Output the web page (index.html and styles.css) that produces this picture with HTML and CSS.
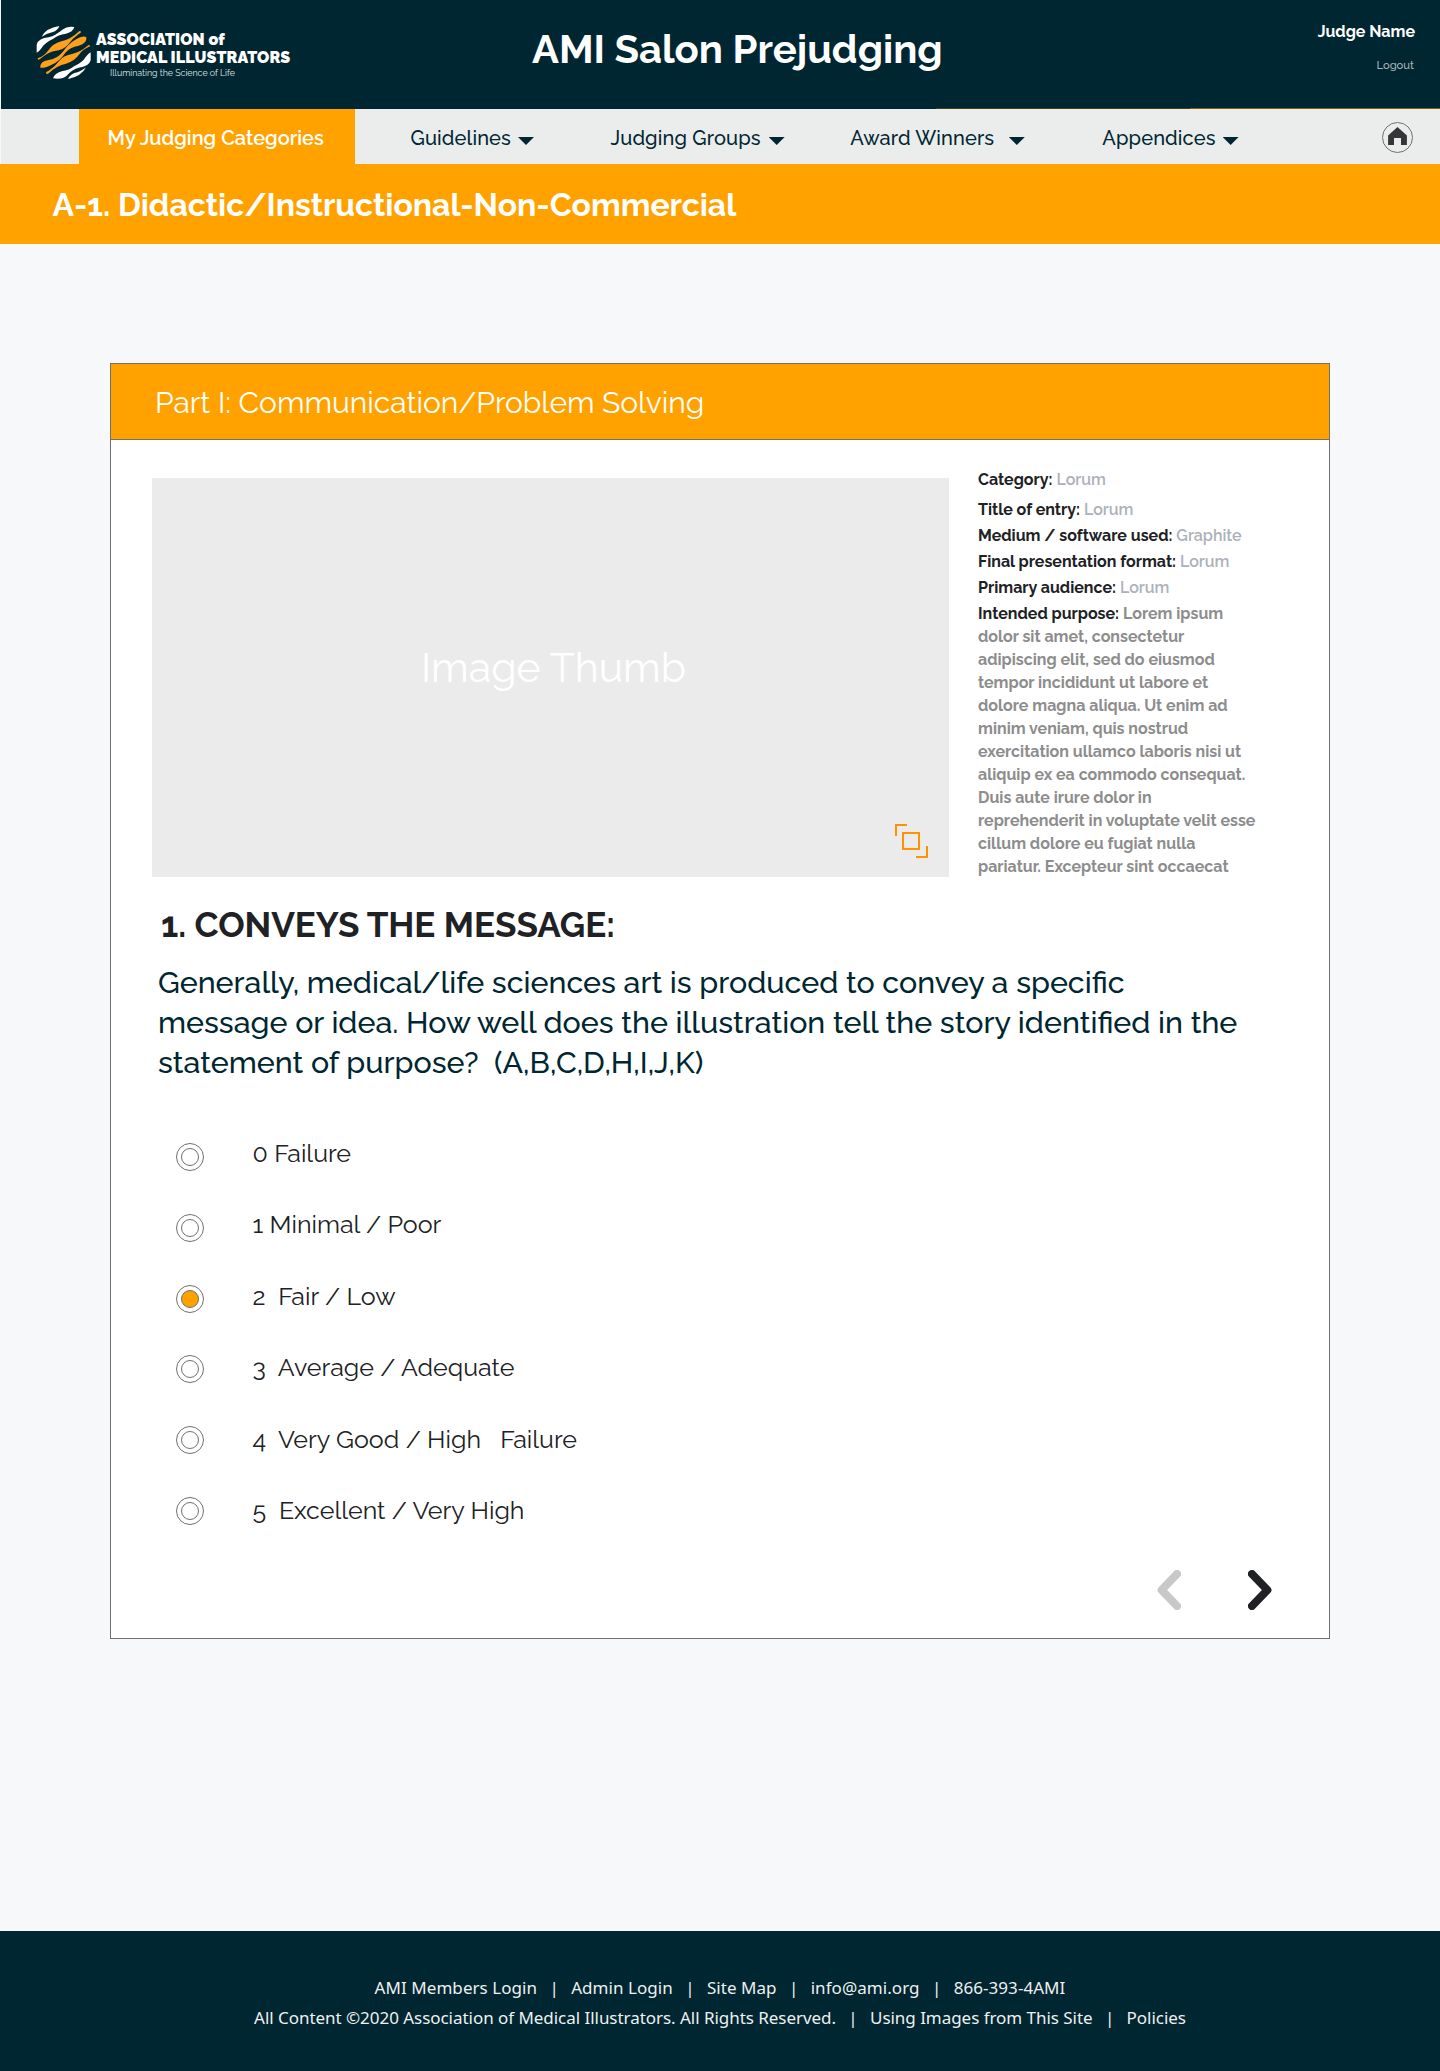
FILE: index.html
```html
<!DOCTYPE html>
<html lang="en">
<head>
<meta charset="utf-8">
<title>AMI Salon Prejudging</title>
<link rel="stylesheet" href="styles.css">
</head>
<body>
<header class="header">
  <a class="logo">
    <svg class="logo-mark" viewBox="108 75 165 165" aria-hidden="true">
      <g fill="#fff">
        <path d="M125 110Q138 84 178 78Q174 90 159 96Q141 99 125 110Z"/>
        <path d="M110 158V134Q116 114 146 112Q167 106 187 89Q202 77 223 81Q219 96 198 101Q174 104 160 116Q134 128 125 144Q119 153 110 158Z"/>
        <path d="M272 157V181Q266 201 236 203Q215 209 200 227Q188 239 159 235Q164 220 185 214Q208 211 222 199Q248 187 257 171Q263 162 272 157Z"/>
        <path d="M258 202Q244 230 204 237Q208 226 223 219Q242 216 258 202Z"/>
      </g>
      <g fill="#ffa01c">
        <path d="M113 175Q134 167 144 152Q158 131 184 124Q212 118 234 97Q240 90 243 95Q243 99 237 101Q216 116 204 134Q190 150 164 153Q142 158 120 177Q113 182 113 175Z"/>
        <path d="M121 203Q119 184 146 180Q172 176 188 156Q204 132 226 119Q252 104 259 112Q262 130 236 137Q210 141 196 158Q180 183 155 194Q130 206 121 203Z"/>
        <path d="M138 219Q138 215 145 213Q166 199 178 182Q192 166 216 162Q240 157 262 138Q270 132 270 139Q248 148 238 163Q224 184 198 191Q170 197 148 218Q140 225 138 219Z"/>
      </g>
    </svg>
    <span class="logo-text">
      <span class="logo-line">ASSOCIATION of</span>
      <span class="logo-line">MEDICAL ILLUSTRATORS</span>
      <span class="logo-tag">Illuminating the Science of Life</span>
    </span>
  </a>
  <h1 class="site-title">AMI Salon Prejudging</h1>
  <div class="account">
    <span class="judge">Judge Name</span>
    <a class="logout">Logout</a>
  </div>
</header>

<nav class="nav">
  <a class="tab">My Judging Categories</a>
  <a class="menu menu-guidelines"><span>Guidelines</span><i class="caret"></i></a>
  <a class="menu menu-groups"><span>Judging Groups</span><i class="caret"></i></a>
  <a class="menu menu-winners"><span>Award Winners</span><i class="caret"></i></a>
  <a class="menu menu-appendices"><span>Appendices</span><i class="caret"></i></a>
  <a class="home" aria-label="Home">
    <svg width="31" height="31" viewBox="0 0 31 31"><circle cx="15.5" cy="15.5" r="15" fill="none" stroke="#707070"/><path d="M15.5 5 24.9 13.6V22.9H19V16H12V22.9H6.1V13.6Z" fill="#363639"/></svg>
  </a>
</nav>

<h2 class="category">A-1. Didactic/Instructional-Non-Commercial</h2>

<main class="card">
  <h3 class="part">Part I: Communication/Problem Solving</h3>
  <div class="body">
    <section class="entry">
      <div class="thumb">
        <span>Image Thumb</span>
        <svg class="expand" width="33" height="34" viewBox="0 0 33 34" fill="none" stroke="#ff9200" stroke-width="2"><path d="M12 1H1V12"/><path d="M8 9H24V25H8Z"/><path d="M32 22V33H21"/></svg>
      </div>
      <div class="meta">
        <p class="meta-first"><b>Category:</b> Lorum</p>
        <p><b>Title of entry:</b> Lorum</p>
        <p><b>Medium / software used:</b> Graphite</p>
        <p><b>Final presentation format:</b> Lorum</p>
        <p><b>Primary audience:</b> Lorum</p>
        <p class="purpose"><b>Intended purpose:</b> Lorem ipsum dolor sit amet, consectetur adipiscing elit, sed do eiusmod tempor incididunt ut labore et dolore magna aliqua. Ut enim ad minim veniam, quis nostrud exercitation ullamco laboris nisi ut aliquip ex ea commodo consequat. Duis aute irure dolor in reprehenderit in voluptate velit esse cillum dolore eu fugiat nulla pariatur. Excepteur sint occaecat</p>
      </div>
    </section>

    <h4 class="criterion">1. CONVEYS THE MESSAGE:</h4>
    <p class="question">Generally, medical/life sciences art is produced to convey a specific<br>message or idea. How well does the illustration tell the story identified in the<br>statement of purpose?&nbsp; (A,B,C,D,H,I,J,K)</p>

    <ul class="options">
      <li><svg class="radio" viewBox="0 0 28 28"><circle cx="14" cy="14" r="13.5"/><circle cx="14" cy="14" r="8.5"/></svg><span>0 Failure</span></li>
      <li><svg class="radio" viewBox="0 0 28 28"><circle cx="14" cy="14" r="13.5"/><circle cx="14" cy="14" r="8.5"/></svg><span>1 Minimal / Poor</span></li>
      <li><svg class="radio" viewBox="0 0 28 28"><circle cx="14" cy="14" r="13.5"/><circle class="on" cx="14" cy="14" r="8.5"/></svg><span>2&nbsp; Fair / Low</span></li>
      <li><svg class="radio" viewBox="0 0 28 28"><circle cx="14" cy="14" r="13.5"/><circle cx="14" cy="14" r="8.5"/></svg><span>3&nbsp; Average / Adequate</span></li>
      <li><svg class="radio" viewBox="0 0 28 28"><circle cx="14" cy="14" r="13.5"/><circle cx="14" cy="14" r="8.5"/></svg><span>4&nbsp; Very Good / High&nbsp;&nbsp; Failure</span></li>
      <li><svg class="radio" viewBox="0 0 28 28"><circle cx="14" cy="14" r="13.5"/><circle cx="14" cy="14" r="8.5"/></svg><span>5&nbsp; Excellent / Very High</span></li>
    </ul>

    <div class="pager">
      <svg class="prev" viewBox="0 0 24 40"><path d="M20 4 4.6 20 20 36"/></svg>
      <svg class="next" viewBox="0 0 24 40"><path d="M4 4 19.4 20 4 36"/></svg>
    </div>
  </div>
</main>

<footer class="footer">
  <div class="links"><a>AMI Members Login</a><i>|</i><a>Admin Login</a><i>|</i><a>Site Map</a><i>|</i><a>info@ami.org</a><i>|</i><a>866-393-4AMI</a></div>
  <div class="links legal"><span>All Content ©2020 Association of Medical Illustrators. All Rights Reserved.</span><i>|</i><a>Using Images from This Site</a><i>|</i><a>Policies</a></div>
</footer>
</body>
</html>
```
FILE: styles.css
```css
* { box-sizing: border-box; margin: 0; padding: 0; }

body {
  min-height: 2071px;
  display: flex;
  flex-direction: column;
  background: #f7f8fa;
  color: #202124;
  font-family: Raleway, Lato, sans-serif;
}

/* Header */
.header {
  height: 109px;
  margin-left: 1px;
  display: grid;
  grid-template-columns: 531px 1fr auto;
  background:
    linear-gradient(90deg, transparent 935px, #4b3d12 935px, #4b3d12 1189px, #87600d 1189px) 0 100% / 100% 1px no-repeat,
    #002631;
  color: #fff;
}

.logo { display: flex; padding: 25px 0 0 35px; }
.logo-mark { width: 55px; height: 55px; margin-right: 5px; }
.logo-text { display: flex; flex-direction: column; padding-top: 6px; }
.logo-line { font-size: 16px; line-height: 18px; font-weight: 900; letter-spacing: 0.1px; }
.logo-tag { font-size: 8.8px; line-height: 12px; padding-left: 14px; color: #dfe4e6; }

.site-title { padding-top: 25px; font-size: 40px; line-height: 47px; font-weight: 700; }

.account { display: flex; flex-direction: column; align-items: flex-end; padding: 22px 25px 0 0; }
.judge { font-size: 16px; line-height: 20px; font-weight: 700; }
.logout { font-size: 11.2px; line-height: 14px; font-weight: 500; margin: 16px 1px 0 0; color: #a9b4b8; }

/* Navigation */
.nav {
  height: 55px;
  margin-left: 1px;
  padding-left: 78px;
  display: flex;
  background: #ebedec;
  color: #002631;
  font-size: 20px;
  line-height: 58px;
  font-weight: 500;
  letter-spacing: 0.15px;
}
.tab { width: 276px; padding-left: 28.5px; background: #ffa200; color: #fff; font-weight: 600; letter-spacing: 0; }
.menu { display: flex; }
.caret {
  width: 16px;
  height: 8px;
  margin: 28px 0 0 7px;
  background: #002631;
  clip-path: polygon(0 0, 100% 0, 50% 100%);
}
.menu-guidelines { margin-left: 55.5px; }
.menu-groups { margin-left: 76.5px; }
.menu-groups .caret { margin-left: 8px; }
.menu-winners { margin-left: 65.5px; }
.menu-winners .caret { margin-left: 14.5px; }
.menu-appendices { margin-left: 77.5px; }
.home { margin: 13px 27px 0 auto; line-height: 0; }

.category {
  height: 80px;
  padding-left: 52.5px;
  background: #ffa200;
  color: #fff;
  font-size: 32px;
  line-height: 82px;
  font-weight: 700;
  letter-spacing: -0.03px;
}

/* Judging card */
.card {
  width: 1220px;
  height: 1276px;
  margin: 119px auto 292px;
  background: #fff;
  border: 1px solid #707070;
}
.part {
  height: 76px;
  padding-left: 44px;
  background: #ffa200;
  border-bottom: 1px solid #707070;
  color: #fff;
  font-size: 30px;
  line-height: 77px;
  font-weight: 400;
  letter-spacing: -0.03px;
}
.body { padding: 28px 57px 0 41px; }
.entry { display: flex; gap: 29px; height: 409px; }
.thumb {
  position: relative;
  width: 797px;
  height: 399px;
  margin-top: 10px;
  padding: 0 0 21px 6px;
  display: flex;
  align-items: center;
  justify-content: center;
  background: #ebebeb;
  color: #fff;
  font-size: 41px;
}
.expand { position: absolute; right: 21px; bottom: 19px; }

.meta { width: 279px; font-size: 16px; line-height: 23px; font-weight: 600; color: #abb1b9; }
.meta p { margin-bottom: 3px; }
.meta .meta-first { margin-bottom: 7px; }
.meta b { font-weight: 700; color: #202124; }
.meta .purpose { font-weight: 700; color: #8d8d8d; }

.criterion { margin: 27px 0 0 9px; font-size: 35px; line-height: 41px; font-weight: 700; letter-spacing: -0.03px; }
.question { margin: 17px 0 0 6px; font-size: 30.4px; line-height: 40px; font-weight: 500; color: #002631; white-space: nowrap; }

.options { list-style: none; margin: 58px 0 0 24px; font-size: 25px; line-height: 26px; font-weight: 400; }
.options li { display: flex; gap: 48.5px; height: 71.4px; }
.radio { width: 28px; height: 28px; margin-top: 3px; fill: none; stroke: #707070; }
.radio .on { fill: #ffa200; }
.options li:nth-child(3) .radio { margin-top: 2px; }
.options li:nth-child(n+4) .radio { margin-top: 0.5px; }

.pager { display: flex; justify-content: flex-end; gap: 67px; margin-top: 2px; }
.pager svg { width: 24px; height: 40px; fill: none; stroke-width: 8; stroke-linecap: round; stroke-linejoin: round; }
.prev { stroke: #c8c8c8; }
.next { stroke: #202124; }

/* Footer */
.footer {
  height: 140px;
  padding-top: 42px;
  background: #002631;
  color: #eef0f0;
  font: 17px/30px "Noto Sans", sans-serif;
}
.links { display: flex; justify-content: center; letter-spacing: 0.06px; }
.legal { letter-spacing: -0.04px; }
.links i { width: 34px; text-align: center; font-style: normal; }
```
